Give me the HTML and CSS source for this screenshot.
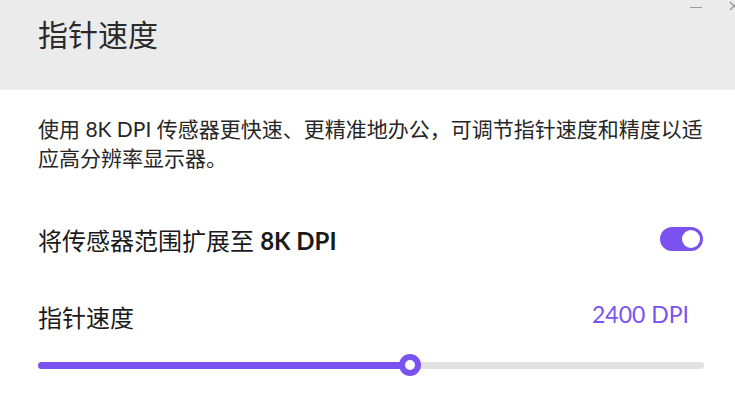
FILE: index.html
```html
<!DOCTYPE html>
<html lang="zh-CN">
<head>
  <meta charset="UTF-8" />
  <title>指针速度</title>
  <link rel="stylesheet" href="styles.css">
</head>
<body>
  <div class="window">
    <div class="header">
      <h1 class="title">指针速度</h1>
      <div class="win-controls">
        <span class="win-min"></span>
        <svg class="win-close" width="10" height="10" viewBox="0 0 10 10"><path d="M1 1 L9 9 M9 1 L1 9" stroke="#9a9a9a" stroke-width="1.3"/></svg>
      </div>
    </div>

    <div class="content">
      <p class="desc">使用 8K DPI 传感器更快速、更精准地办公，可调节指针速度和精度以适应高分辨率显示器。</p>

      <div class="row toggle-row">
        <span class="label">将传感器范围扩展至 <b>8K DPI</b></span>
        <span class="toggle on"><span class="knob"></span></span>
      </div>

      <div class="row speed-row">
        <span class="label">指针速度</span>
        <span class="value">2400 DPI</span>
      </div>

      <div class="slider">
        <div class="track">
          <div class="fill" style="width: 55.9%"><span class="thumb"></span></div>
        </div>
      </div>
    </div>
  </div>
</body>
</html>
```

FILE: styles.css
```css
:root {
  --purple: #7b52ef;
  --header: #ebebeb;
  --text: #222;
  --track: #e2e2e2;
}
* {
  box-sizing: border-box;
  margin: 0;
  padding: 0;
}
html, body {
  width: 735px;
  height: 420px;
  overflow: hidden;
  background: #fff;
  font-family: Lato, "Noto Sans CJK SC", sans-serif;
  color: var(--text);
}
.header {
  position: relative;
  height: 90px;
  background: var(--header);
  padding: 13px 38px 0;
}
.title {
  font-family: "Noto Sans CJK SC", sans-serif;
  font-size: 30px;
  font-weight: 400;
  line-height: 40px;
  color: #2a2a2a;
}
.win-controls {
  position: absolute;
  top: 1px;
  right: -4px;
  display: flex;
  align-items: center;
  gap: 27px;
}
.win-min {
  display: block;
  width: 12px;
  height: 1.5px;
  margin-top: 3px;
  background: #9a9a9a;
}
.content {
  padding: 0 31px 0 38px;
}
.desc {
  padding-top: 24px;
  font-size: 21px;
  line-height: 29px;
  font-weight: 400;
  color: #262626;
}
.row {
  display: flex;
  align-items: center;
  justify-content: space-between;
  height: 40px;
}
.toggle-row {
  margin-top: 47px;
}
.speed-row {
  margin-top: 37px;
}
.label {
  font-size: 24px;
  color: #1a1a1a;
}
.label b {
  font-weight: 700;
}
.value {
  font-size: 23px;
  color: var(--purple);
  padding-right: 15px;
  margin-top: -4px;
}
.toggle {
  display: flex;
  align-items: center;
  justify-content: flex-end;
  width: 43px;
  height: 24px;
  border-radius: 12px;
  background: var(--purple);
  padding: 0 3px;
  margin-right: 1px;
}
.knob {
  width: 18px;
  height: 18px;
  border-radius: 50%;
  background: #fff;
}
.slider {
  margin-top: 18px;
  height: 22px;
  display: flex;
  align-items: center;
}
.track {
  width: 100%;
  height: 7px;
  border-radius: 4px;
  background: var(--track);
}
.fill {
  position: relative;
  height: 100%;
  border-radius: 4px;
  background: var(--purple);
}
.thumb {
  position: absolute;
  right: -11px;
  top: 50%;
  width: 22px;
  height: 22px;
  margin-top: -11px;
  border-radius: 50%;
  border: 6.5px solid var(--purple);
  background: #fff;
}
```
